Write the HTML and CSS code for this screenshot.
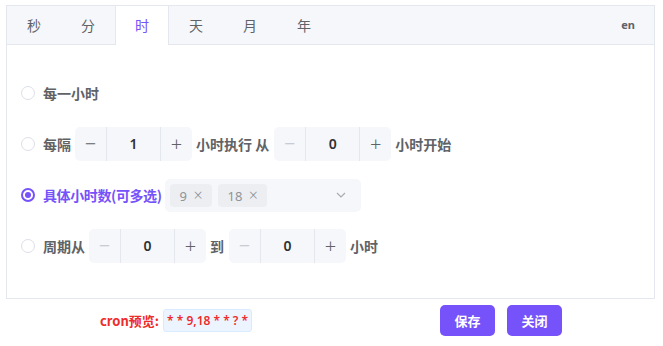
FILE: index.html
```html
<!DOCTYPE html>
<html lang="zh-CN">
<head>
    <meta charset="UTF-8">
    <meta name="viewport" content="width=device-width, initial-scale=1.0">
    <title>Cron</title>
    <link rel="stylesheet" href="styles.css">
</head>
<body>
    <div class="card">
        <div class="tabs">
            <div class="tab">秒</div>
            <div class="tab">分</div>
            <div class="tab active">时</div>
            <div class="tab">天</div>
            <div class="tab">月</div>
            <div class="tab">年</div>
            <div class="lang">en</div>
        </div>

        <div class="pane">
            <div class="row">
                <span class="radio"></span>
                <span class="label">每一小时</span>
            </div>

            <div class="row">
                <span class="radio"></span>
                <span class="label">每隔</span>
                <div class="num">
                    <span class="btn">&minus;</span>
                    <span class="val">1</span>
                    <span class="btn">+</span>
                </div>
                <span class="label">小时执行 从</span>
                <div class="num">
                    <span class="btn off">&minus;</span>
                    <span class="val">0</span>
                    <span class="btn">+</span>
                </div>
                <span class="label">小时开始</span>
            </div>

            <div class="row">
                <span class="radio on"></span>
                <span class="label checked">具体小时数(可多选)</span>
                <div class="select">
                    <span class="tag">9 <i>&times;</i></span>
                    <span class="tag">18 <i>&times;</i></span>
                    <svg class="arrow" width="12" height="12" viewBox="0 0 12 12"><path d="M2 4l4 4 4-4" fill="none" stroke="#a8abb2" stroke-width="1.2"/></svg>
                </div>
            </div>

            <div class="row">
                <span class="radio"></span>
                <span class="label">周期从</span>
                <div class="num">
                    <span class="btn off">&minus;</span>
                    <span class="val">0</span>
                    <span class="btn">+</span>
                </div>
                <span class="label">到</span>
                <div class="num">
                    <span class="btn off">&minus;</span>
                    <span class="val">0</span>
                    <span class="btn">+</span>
                </div>
                <span class="label">小时</span>
            </div>
        </div>
    </div>

    <div class="footer">
        <span class="preview-label">cron预览:</span>
        <span class="preview">* * 9,18 * * ? *</span>
        <button class="primary first">保存</button>
        <button class="primary">关闭</button>
    </div>
</body>
</html>
```

FILE: styles.css
```css
body{
    margin: 0;
    font-family: "Noto Sans", "Noto Sans CJK SC", sans-serif;
    color: #606266;
}
.card{
    margin: 5px 0 0 6px;
    width: 647px;
    border: 1px solid #e4e7ed;
}
.tabs{
    display: flex;
    height: 38px;
    background-color: #f5f7fa;
    border-bottom: 1px solid #e4e7ed;
}
.tab{
    width: 54px;
    line-height: 38px;
    text-align: center;
    font-size: 14px;
    font-family: "Noto Sans CJK SC", sans-serif;
    color: #606266;
    border-left: 1px solid transparent;
    border-right: 1px solid transparent;
    box-sizing: border-box;
}
.tab.active{
    background-color: #fff;
    color: #7552f9;
    border-color: #e4e7ed;
    height: 39px;
}
.lang{
    margin-left: auto;
    padding-right: 19px;
    line-height: 38px;
    font-size: 11px;
    font-weight: bold;
    color: #606266;
}
.pane{
    padding: 31px 14px 35px 14px;
}
.row{
    display: flex;
    align-items: center;
    height: 34px;
    margin-bottom: 17px;
}
.row:last-child{
    margin-bottom: 0;
}
.radio{
    width: 12px;
    height: 12px;
    border: 1px solid #dcdfe6;
    border-radius: 50%;
    margin-right: 8px;
    position: relative;
}
.radio.on{
    border: 2px solid #7552f9;
    width: 10px;
    height: 10px;
}
.radio.on::after{
    content: "";
    position: absolute;
    left: 2px;
    top: 2px;
    width: 6px;
    height: 6px;
    border-radius: 50%;
    background-color: #7552f9;
}
.label{
    font-family: "Noto Sans CJK SC", sans-serif;
    font-size: 14px;
    font-weight: bold;
    color: #606266;
    margin-right: 4px;
}
.label.checked{
    color: #7552f9;
    letter-spacing: -0.4px;
    margin-right: 3px;
}
.num + .label{
    margin-left: 4px;
    margin-right: 5px;
}
.num{
    display: flex;
    width: 117px;
    height: 34px;
    background-color: #f5f7fa;
    border-radius: 5px;
}
.btn{
    width: 31px;
    line-height: 34px;
    text-align: center;
    font-size: 20px;
    font-weight: 300;
    color: #606266;
}
.btn:first-child{
    border-right: 1px solid #e4e7ed;
}
.btn:last-child{
    border-left: 1px solid #e4e7ed;
}
.btn.off{
    color: #c0c4cc;
}
.val{
    flex: 1;
    line-height: 34px;
    text-align: center;
    font-size: 14px;
    font-weight: 600;
    color: #303133;
}
.select{
    display: flex;
    align-items: center;
    gap: 6px;
    width: 196px;
    height: 33px;
    padding-left: 5px;
    box-sizing: border-box;
    background-color: #f5f7fa;
    border-radius: 5px;
}
.tag{
    height: 23px;
    line-height: 23px;
    padding: 0 9px 0 10px;
    background-color: #eceef2;
    border-radius: 4px;
    font-size: 13px;
    color: #909399;
}
.tag i{
    font-style: normal;
    font-size: 16px;
    font-weight: 300;
    margin-left: 3px;
}
.arrow{
    margin-left: auto;
    margin-right: 14px;
}
.footer{
    display: flex;
    align-items: center;
    height: 43px;
    padding-left: 100px;
}
.preview-label{
    font-family: "Noto Sans CJK SC", sans-serif;
    font-size: 13px;
    font-weight: bold;
    color: #ee2b2b;
    margin-right: 4px;
}
.preview{
    width: 89px;
    height: 23px;
    line-height: 21px;
    box-sizing: border-box;
    text-align: center;
    font-size: 12px;
    font-weight: 600;
    color: #ee2b2b;
    background-color: #ecf5ff;
    border: 1px solid #d9ecff;
    border-radius: 3px;
}
.primary{
    width: 55px;
    height: 31px;
    border: none;
    border-radius: 5px;
    background-color: #7552f9;
    color: white;
    font-family: "Noto Sans CJK SC", sans-serif;
    font-size: 13px;
    font-weight: bold;
    margin-left: 12px;
}
.primary.first{
    margin-left: 188px;
}
```
